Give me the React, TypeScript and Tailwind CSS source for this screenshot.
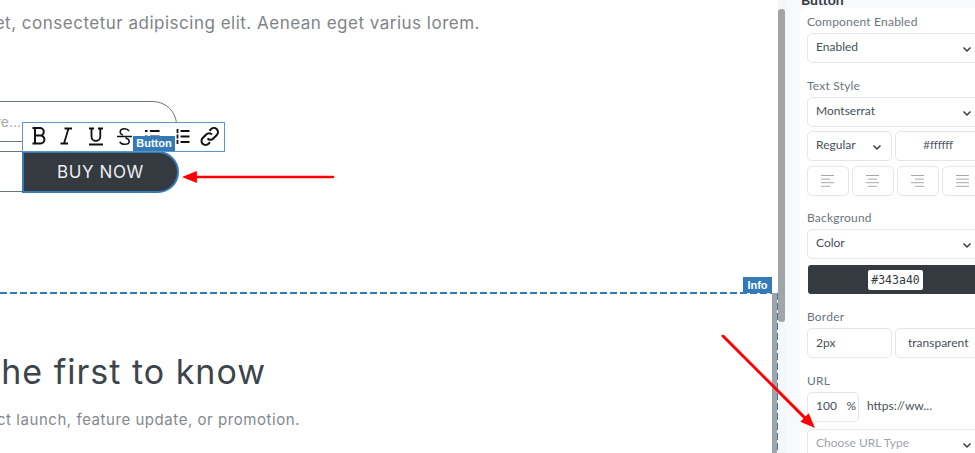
const Chevron = ({ className = "" }: { className?: string }) => (
  <svg width="10" height="7" viewBox="0 0 10 7" className={className} fill="none" stroke="#343a40" strokeWidth="1.5">
    <path d="M1.500 1.500 5 5l3.500-3.500" />
  </svg>
);

const AlignIcon = ({ lines }: { lines: number[][] }) => (
  <svg width="14" height="14" viewBox="0 0 14 14" stroke="#a5a9ad" strokeWidth="1">
    {lines.map(([a, b], i) => (
      <path key={i} d={`M${a} ${1.500 + i * 3.600}H${b}`} />
    ))}
  </svg>
);

const aligns = [
  [[0, 13], [0, 9], [0, 13], [0, 9]],
  [[0, 13], [2, 11], [0, 13], [2, 11]],
  [[0, 13], [4, 13], [0, 13], [4, 13]],
  [[0, 13], [0, 13], [0, 13], [0, 13]],
];

const fieldClass = "bg-white border border-[#e4e6e8] rounded-[5px] shrink-0";

function Select({ label, placeholder }: { label: string; placeholder?: boolean }) {
  return (
    <div className={`${fieldClass} h-[30px] w-[180px] flex items-center justify-between pl-2 pr-[14px]`}>
      <span className={placeholder ? "text-[#a0a4a8] pb-[2px]" : "text-[#495057] pb-[2px]"}>{label}</span>
      <Chevron className="mt-[2px]" />
    </div>
  );
}

function Toolbar() {
  return (
    <div className="absolute left-[22px] top-[122px] w-[203px] h-[30px] bg-white border border-[#5b96c9] flex items-center text-black">
      <svg width="201" height="28" viewBox="0 0 201 28" fill="none" stroke="#111" strokeWidth="1.6" className="shrink-0">
        {/* bold */}
        <path strokeWidth="2" d="M9.500 5h7.500a3.800 3.800 0 0 1 0 7.600h-5 5.500a3.900 3.900 0 0 1 0 7.800H9.500M12 5v15.400" />
        {/* italic */}
        <path strokeWidth="1.800" d="M41.500 5.500h7.500M37.500 20.500h7.500M45.500 5.500l-4.500 15" />
        {/* underline */}
        <path strokeWidth="1.800" d="M66 5.500h5M75 5.500h5M68.500 5.500v8a4.400 4.400 0 0 0 8.800 0v-8M66 21.500h14" />
        {/* strike */}
        <path strokeWidth="1.500" d="M106 8c-1-1.600-2.600-2.300-4.500-2.300-2.400 0-4.300 1.300-4.300 3.300 0 1.500 1 2.500 2.600 3M102.500 15c2.200.6 3.700 1.500 3.700 3.200 0 2-1.900 3.100-4.500 3.100-2.300 0-4-.9-5-2.500M94 13.500h15" />
        {/* unordered */}
        <path strokeWidth="1.800" d="M127 8h9.500M127 13.500h9.500M127 19h9.500M122 8h2.500M122 13.500h2.500M122 19h2.500" />
        {/* ordered */}
        <path strokeWidth="1.800" d="M157.500 8h9M157.500 13.500h9M157.500 19h9M154.500 6v4M154.500 11.500v4M154.500 17v4" />
        {/* link */}
        <path strokeWidth="2" d="M184.500 15.500a4 4 0 0 0 5.800 0l3.500-3.500a4.100 4.100 0 0 0-5.800-5.800l-1.500 1.500M189 11.500a4 4 0 0 0-5.800 0l-3.500 3.500a4.100 4.100 0 0 0 5.800 5.800l1.500-1.500" />
      </svg>
      <span className="absolute left-[110px] top-[13px] h-[15px] w-[42px] bg-[#337ab7] text-white text-[11px] font-bold leading-[15px] text-center font-['Liberation_Sans',sans-serif]">
        Button
      </span>
    </div>
  );
}

function Arrow({ x1, y1, x2, y2, w }: { x1: number; y1: number; x2: number; y2: number; w: number }) {
  const a = Math.atan2(y2 - y1, x2 - x1);
  const len = 16;
  const spread = 0.38;
  const p1 = [x2 - len * Math.cos(a - spread), y2 - len * Math.sin(a - spread)];
  const p2 = [x2 - len * Math.cos(a + spread), y2 - len * Math.sin(a + spread)];
  return (
    <g>
      <line x1={x1} y1={y1} x2={x2 - 8 * Math.cos(a)} y2={y2 - 8 * Math.sin(a)} stroke="#ff0000" strokeWidth={w} strokeLinecap="round" />
      <polygon points={`${x2},${y2} ${p1[0]},${p1[1]} ${p2[0]},${p2[1]}`} fill="#ff0000" />
    </g>
  );
}

export default function App() {
  return (
    <div className="relative w-[975px] h-[453px] overflow-hidden bg-white flex font-['Lato',sans-serif]">
      {/* Page canvas */}
      <div className="relative w-[772px] h-full overflow-hidden font-['Inter',sans-serif] shrink-0">
        <div className="h-[292px]">
          <div className="w-[480px] flex justify-end whitespace-nowrap overflow-hidden text-[17px] leading-[24px] tracking-[0.5px] text-[#808488] pt-[11px]">
            Lorem ipsum dolor sit amet, consectetur adipiscing elit. Aenean eget varius lorem.
          </div>
          <div className="mt-[66px] -ml-[160px] w-[337px] h-[41px] border border-[#6c757d] rounded-tr-[24px] flex items-center">
            <span className="w-[180px] text-right text-[14px] text-[#a8a8a8] whitespace-nowrap shrink-0">Enter your email here...</span>
          </div>
          <div className="mt-[9px] -ml-5 w-[199px] h-[41px] flex">
            <div className="w-[42px] border border-[#6c757d] border-r-0" />
            <div className="w-[157px] h-[42px] border-2 border-[#337ab7] rounded-r-[21px] bg-[#343a40] text-[#eceef0] text-[17px] tracking-[0.6px] pt-[1px] flex items-center justify-center">
              BUY NOW
            </div>
          </div>
        </div>
        <div className="h-[2px] bg-[repeating-linear-gradient(90deg,#337ab7_0,#337ab7_7px,transparent_7px,transparent_10px)]" />
        <div className="w-[266px] flex justify-end whitespace-nowrap overflow-hidden mt-[56px] text-[34px] leading-[44px] tracking-[1px] text-[#3d444b]">
          Be the first to know
        </div>
        <div className="w-[300px] flex justify-end whitespace-nowrap overflow-hidden mt-[16px] text-[15px] leading-[20px] tracking-[0.55px] text-[#84888c]">
          Get notified about every new product launch, feature update, or promotion.
        </div>
        <Toolbar />
        <span className="absolute right-0 top-[277px] w-[29px] h-[16px] bg-[#337ab7] text-white text-[11px] font-bold leading-[16px] text-center font-['Liberation_Sans',sans-serif]">
          Info
        </span>
      </div>

      {/* Strip between canvas and inspector */}
      <div className="relative w-[6px] h-full bg-white shrink-0">
        <div className="absolute left-0 top-[293px] bottom-0 w-[5px] bg-[#a1a5a8]" />
        <div className="absolute left-[5px] top-[293px] bottom-0 w-[2px] bg-[repeating-linear-gradient(180deg,#337ab7_0,#337ab7_7px,transparent_7px,transparent_10px)]" />
      </div>

      {/* Scrollbar */}
      <div className="relative w-[7px] h-full bg-[#f5f6f7] shrink-0">
        <div className="absolute left-0 top-[9px] h-[313px] w-[7px] rounded-[3px] bg-[#a1a5a8]" />
      </div>

      {/* Inspector */}
      <div className="flex-1 h-full bg-[#f8f9fa] pl-[15px] text-[12px] leading-[16px] text-[#6c757d] min-w-0">
        <div className="h-[8px] font-bold text-[14px] text-[#343a40] leading-[0px] pl-[1px]">Button</div>
        <div className="bg-white rounded-tl-[5px] h-[500px] pl-[7px] pt-[6px] flex flex-col">
          <div className="tracking-[0.2px]">Component Enabled</div>
          <div className="mt-[3px]"><Select label="Enabled" /></div>
          <div className="mt-[15px] tracking-[0.2px]">Text Style</div>
          <div className="mt-[3px]"><Select label="Montserrat" /></div>
          <div className="flex gap-[3px] mt-[4px]">
            <div className={`${fieldClass} h-[30px] w-[85px] flex items-center justify-between pl-2 pr-[9px] text-[#495057]`}>
              <span className="pb-[2px]">Regular</span>
              <Chevron className="mt-[2px]" />
            </div>
            <div className={`${fieldClass} h-[30px] w-[100px] flex items-center pl-[27px] pb-[2px] text-[#495057] font-['Noto_Sans',sans-serif] text-[11px]`}>
              #ffffff
            </div>
          </div>
          <div className="flex gap-[3px] mt-[5px]">
            {aligns.map((lines, i) => (
              <div key={i} className={`${fieldClass} h-[30px] w-[42px] flex items-center justify-center`}>
                <AlignIcon lines={lines} />
              </div>
            ))}
          </div>
          <div className="mt-[14px] tracking-[0.2px]">Background</div>
          <div className="mt-[3px]"><Select label="Color" /></div>
          <div className="mt-[6px] ml-[1px] w-[180px] h-[29px] rounded-[3px] bg-[#343a40] flex items-center justify-center pr-[5px] shrink-0">
            <span className="bg-white rounded-[2px] px-[3px] text-[11.500px] leading-[20px] text-[#343a40] font-['DejaVu_Sans_Mono',monospace]">
              #343a40
            </span>
          </div>
          <div className="mt-[15px] tracking-[0.2px]">Border</div>
          <div className="flex gap-[3px] mt-[3px]">
            <div className={`${fieldClass} h-[30px] w-[85px] flex items-center pl-2 pb-[1px] text-[#495057]`}>2px</div>
            <div className={`${fieldClass} h-[30px] w-[100px] flex items-center pl-3 text-[#495057]`}>transparent</div>
          </div>
          <div className="mt-[15px] tracking-[0.2px]">URL</div>
          <div className="flex items-center mt-[3px]">
            <div className={`${fieldClass} h-[30px] w-[52px] flex items-center justify-between pl-2 pr-[2px] pb-[2px] text-[#495057]`}>
              <span>100</span>
              <span>%</span>
            </div>
            <span className="ml-2 pb-[2px] text-[#495057]">https://ww...</span>
          </div>
          <div className="mt-[7px]"><Select label="Choose URL Type" placeholder /></div>
        </div>
      </div>

      {/* Annotation arrows */}
      <svg className="absolute inset-0 pointer-events-none" width="975" height="453">
        <Arrow x1={333} y1={177} x2={182} y2={177} w={2.600} />
        <Arrow x1={723} y1={336} x2={815} y2={428} w={3} />
      </svg>
    </div>
  );
}
